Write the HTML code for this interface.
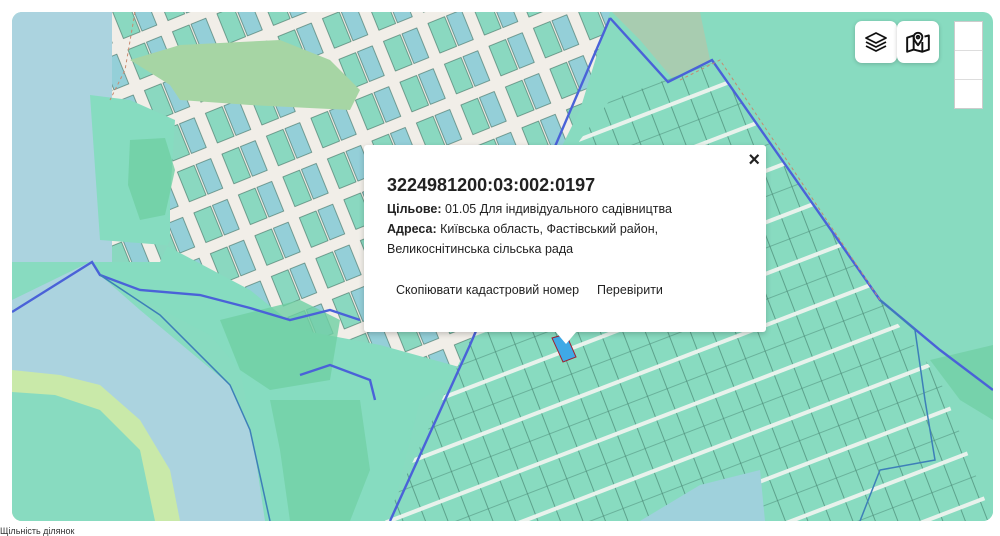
<!DOCTYPE html>
<html><head><meta charset="utf-8"><style>
html,body{margin:0;padding:0;background:#fff;width:1000px;height:533px;overflow:hidden;font-family:"Liberation Sans",Arial,sans-serif;}
#map{position:absolute;left:12px;top:12px;width:981px;height:509px;border-radius:10px;overflow:hidden;background:#88dbc0;}
svg{position:absolute;left:0;top:0;}
.btn{position:absolute;top:9px;width:42px;height:42px;background:#fff;border-radius:7px;box-shadow:0 1px 4px rgba(0,0,0,.2);display:flex;align-items:center;justify-content:center;}
#zoom{position:absolute;left:942px;top:9px;width:29px;height:88px;background:#fff;border:1px solid #ccc;box-sizing:border-box;}
#zoom div{height:29px;border-bottom:1px solid #ddd;box-sizing:border-box}
#pop{position:absolute;left:364px;top:145px;width:402px;height:187px;background:#fff;border-radius:3px;box-shadow:0 2px 6px rgba(0,0,0,.2);color:#222;}
#pop h1{margin:0;position:absolute;left:23px;top:30px;font-size:18px;font-weight:bold;color:#222}
#pop p{margin:0;position:absolute;left:23px;font-size:12.5px;}
#tip{position:absolute;left:555px;top:331px;width:0;height:0;border-left:11px solid transparent;border-right:11px solid transparent;border-top:13px solid #fff;}
#foot{position:absolute;left:0;top:526px;font-size:9px;color:#333;}
</style></head><body>
<div id="map">
<svg width="981" height="509" viewBox="12 12 981 509">
<defs>
<pattern id="grid" patternUnits="userSpaceOnUse" width="21" height="48" patternTransform="rotate(-21)">
<rect width="21" height="48" fill="#88dbc0"/>
<rect y="0" width="21" height="4" fill="#e8f2ec"/>
<line x1="0.5" y1="4" x2="0.5" y2="48" stroke="#4a8a76" stroke-width="0.7"/>
<line x1="0" y1="26" x2="21" y2="26" stroke="#4a8a76" stroke-width="0.5"/>
</pattern>
<pattern id="blk" patternUnits="userSpaceOnUse" width="48" height="44" patternTransform="rotate(-22)">
<rect width="48" height="44" fill="#f1eee8"/>
<rect x="4" y="6" width="18" height="32" fill="#8ad8c0" stroke="#3d6f60" stroke-width="0.6"/>
<rect x="24" y="6" width="16" height="32" fill="#94cfd8" stroke="#3d6f60" stroke-width="0.6"/>
</pattern>
</defs>
<polygon points="100,12 610,12 580,110 560,150 470,370 380,360 300,330 200,280 110,270 95,150" fill="url(#blk)"/>
<polygon points="130,60 180,45 280,40 330,60 360,90 350,110 250,105 180,100 170,85" fill="#a6d5a4"/>
<polygon points="612,12 700,12 710,60 672,78 640,40" fill="#a8ccb0"/>
<rect x="12" y="12" width="100" height="250" fill="#abd3df"/>
<polygon points="12,300 90,262 100,275 140,310 230,385 250,430 270,521 12,521" fill="#abd3df"/>
<polygon points="90,95 130,100 175,120 170,200 170,240 160,262 90,262 100,275 125,290 210,335 240,370 250,420 265,521 390,521 420,400 470,370 380,345 300,330 250,290 165,245 100,240" fill="#86dcc0"/>
<polygon points="220,320 300,300 340,320 330,380 270,390 240,370" fill="#6fcfa3" opacity=".8"/>
<polygon points="130,140 165,138 175,170 165,215 140,220 128,185" fill="#6fcfa3" opacity=".8"/>
<polygon points="270,400 360,400 370,470 350,521 290,521 280,450" fill="#6fcfa3" opacity=".7"/>
<polygon points="12,370 60,375 100,385 140,420 170,470 180,521 12,521" fill="#c9e9a9"/>
<polygon points="12,392 55,395 100,410 140,450 155,521 12,521" fill="#88dbc0"/>
<polygon points="385,521 470,340 580,140 610,100 715,62 880,300 993,390 993,521" fill="url(#grid)"/>
<polygon points="880,300 993,240 993,521 940,380" fill="#88dbc0"/>
<polygon points="930,360 993,345 993,420 960,400" fill="#6fcfa3" opacity=".7"/>
<polygon points="640,521 700,485 760,470 765,521" fill="#9fd1dc"/>
<g fill="none" stroke="#4a62d8" stroke-width="2.4">
<polyline points="12,312 92,262 100,275 140,290 200,295 250,308 290,320 330,310 360,320"/>
<polyline points="390,521 470,345 610,18"/>
<polyline points="610,18 668,82 712,60 880,300 940,350 993,390"/>
<polyline points="300,375 330,365 370,380 375,400"/>
</g>
<g fill="none" stroke="#3d7fb8" stroke-width="1.5"><polyline points="100,275 160,315 230,385 250,430 270,521"/><polyline points="880,300 915,330 925,400 935,460 880,470 860,521"/></g>
<g fill="none" stroke="#c78a70" stroke-width="1" stroke-dasharray="3,3"><polyline points="135,12 125,70 110,100"/><polyline points="680,80 720,60 880,300"/></g>
<polygon points="552,338 566,334 576,357 563,362" fill="#3fa9e6" stroke="#a02030" stroke-width="1"/>
</svg>
<div class="btn" style="left:843px"><svg width="24" height="24" viewBox="0 0 24 24" fill="none" stroke="#111" stroke-width="1.8" stroke-linejoin="round" style="position:static"><path d="M12 3L2 8l10 5 10-5z"/><path d="M2 12l10 5 10-5"/><path d="M2 16l10 5 10-5"/></svg></div>
<div class="btn" style="left:885px"><svg width="26" height="26" viewBox="0 0 24 24" fill="none" stroke="#111" stroke-width="1.8" stroke-linejoin="round" style="position:static"><path d="M8 6L2 8v13l6-2 8 2 6-2V6l-4 1"/><path d="M8 6v13M16 12v9"/><path d="M12 15c-2-3-4-5-4-7.5a4 4 0 0 1 8 0C16 10 14 12 12 15z"/><circle cx="12" cy="7.5" r="1.2"/></svg></div>
<div id="zoom"><div></div><div></div><div style="border:none"></div></div>
</div>
<div id="pop">
<div style="position:absolute;right:6px;top:4px;font-size:20px;font-weight:bold;">×</div>
<h1>3224981200:03:002:0197</h1>
<p style="top:57px"><b>Цільове:</b> 01.05 Для індивідуального садівництва</p>
<p style="top:77px"><b>Адреса:</b> Київська область, Фастівський район,</p>
<p style="top:97px">Великоснітинська сільська рада</p>
<p style="top:138px;left:32px">Скопіювати кадастровий номер</p>
<p style="top:138px;left:233px">Перевірити</p>
</div>
<div id="tip"></div>
<div id="foot">Щільність ділянок</div>
</body></html>
